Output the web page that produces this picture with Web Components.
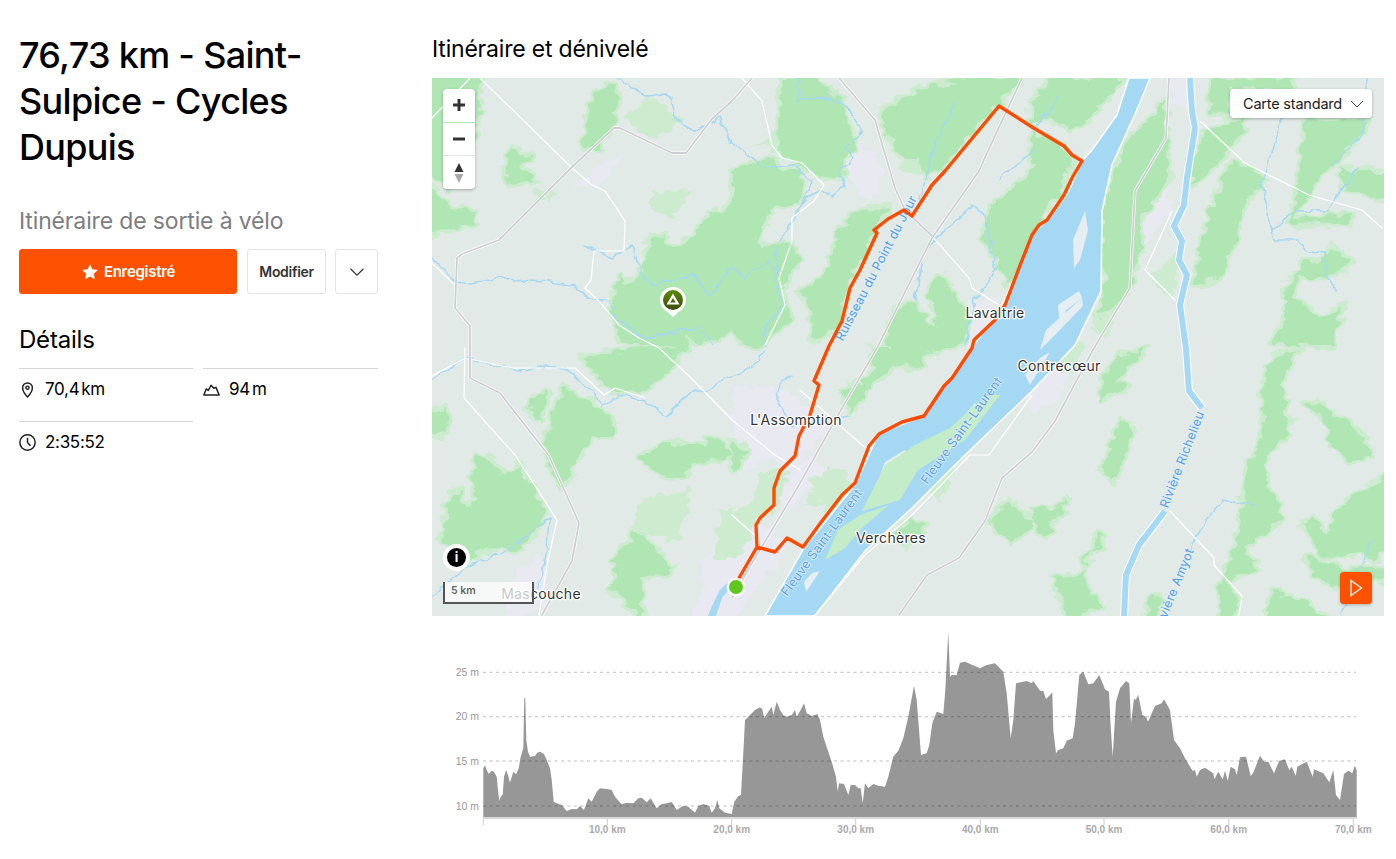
<!DOCTYPE html>
<html lang="fr">
<head>
<meta charset="utf-8">
<title>76,73 km - Saint-Sulpice - Cycles Dupuis</title>
<style>
  html, body { margin: 0; background: #fff; }
  body { font-family: Inter, "Liberation Sans", sans-serif; color: #000; overflow: hidden; }
</style>
</head>
<body>
<route-page>
  <route-summary slot="side" heading="76,73 km - Saint-Sulpice - Cycles Dupuis" kind="Itinéraire de sortie à vélo">
    <stat-item icon="pin">70,4<small>km</small></stat-item>
    <stat-item icon="hill">94<small>m</small></stat-item>
    <stat-item icon="clock">2:35:52</stat-item>
  </route-summary>
  <route-map></route-map>
  <elevation-chart></elevation-chart>
</route-page>

<script>
// Page Layout
class RoutePage extends HTMLElement {
  constructor() {
    super();
    this.attachShadow({ mode: 'open' });
    this.shadowRoot.innerHTML = `
      <style>
        :host { display: grid; grid-template-columns: 432px 952px; height: 859px; overflow: hidden; }
        h2 { font: 400 23px/28px Inter, sans-serif; letter-spacing: -0.2px; margin: 35px 0 15px; color: #000; }
      </style>
      <slot name="side"></slot>
      <main>
        <h2>Itinéraire et dénivelé</h2>
        <slot></slot>
      </main>
    `;
  }
}

const statIcons = {
  pin: `<path d="M8 15s-4.6-4.6-4.6-8.6a4.6 4.6 0 0 1 9.2 0C12.600 10.400 8 15 8 15z" fill="none" stroke="#222" stroke-width="1.400"/><circle cx="8" cy="6.300" r="1.500" fill="none" stroke="#222" stroke-width="1.300"/>`,
  hill: `<path d="M.8 13.200 3 7.500l2 1.300L7.600 4l2.600 2.800 2-.8 3 7.200z" fill="none" stroke="#222" stroke-width="1.400" stroke-linejoin="round"/>`,
  clock: `<circle cx="8" cy="8" r="7.200" fill="none" stroke="#222" stroke-width="1.400"/><path d="M8 3.500V8l2.800 3" fill="none" stroke="#222" stroke-width="1.400"/>`
};

// StatItem Component
class StatItem extends HTMLElement {
  constructor() {
    super();
    this.attachShadow({ mode: 'open' });
  }
  connectedCallback() {
    const icon = this.getAttribute('icon');
    this.shadowRoot.innerHTML = `
      <style>
        :host { display: flex; align-items: center; gap: 9px; height: 41px; box-sizing: border-box;
          border-top: 1px solid #d4d4d6; font: 400 17px/20px Inter, sans-serif; color: #000; letter-spacing: -0.3px; }
        svg { width: 17px; height: 17px; flex: none; }
        ::slotted(small) { font-size: 17px; margin-left: 2px; }
      </style>
      <svg viewBox="0 0 16 16">${statIcons[icon]}</svg>
      <span><slot></slot></span>
    `;
  }
}

// RouteSummary Component
class RouteSummary extends HTMLElement {
  constructor() {
    super();
    this.attachShadow({ mode: 'open' });
  }
  connectedCallback() {
    const heading = this.getAttribute('heading') || '';
    const kind = this.getAttribute('kind') || '';
    this.shadowRoot.innerHTML = `
      <style>
        :host { display: block; padding: 32px 0 0 19px; width: 359px; }
        h1 { font: 500 36px/46px Inter, sans-serif; letter-spacing: -0.7px; margin: 0; color: #000; width: 340px; }
        p { font: 400 23px/28px Inter, sans-serif; color: #7d7d82; letter-spacing: -0.15px; margin: 37px 0 14px; }
        .actions { display: flex; gap: 9px; height: 45px; }
        button { font: 600 14px/20px Inter, sans-serif; letter-spacing: -0.3px; border-radius: 3px; padding: 0; background: #fff;
          border: 1px solid #e4e4e6; color: #333; display: flex; align-items: center; justify-content: center; gap: 5px; }
        .save { width: 218px; background: #fc5200; border-color: #fc5200; color: #fff; margin-right: 1px; font-size: 15px; }
        .edit { width: 79px; }
        .more { width: 43px; }
        h3 { font: 400 24px/28px Inter, sans-serif; letter-spacing: -0.2px; margin: 32px 0 14px; color: #000; }
        .stats { display: grid; grid-template-columns: 174px 175px; column-gap: 10px; row-gap: 12px; }
      </style>
      <h1>${heading}</h1>
      <p>${kind}</p>
      <div class="actions">
        <button class="save">
          <svg width="18" height="18" viewBox="0 0 18 18"><path fill="#fff" d="M9 1.300l2.400 5 5.400.7-4 3.800 1 5.400L9 13.600l-4.800 2.600 1-5.400-4-3.800 5.400-.7z"/></svg>
          Enregistré
        </button>
        <button class="edit">Modifier</button>
        <button class="more" aria-label="Plus">
          <svg width="16" height="16" viewBox="0 0 16 16"><path d="M1.500 4.800 8 11.200l6.500-6.400" fill="none" stroke="#333" stroke-width="1.200"/></svg>
        </button>
      </div>
      <h3>Détails</h3>
      <div class="stats"><slot></slot></div>
    `;
  }
}

const pts = a => a.map(p => p.join(',')).join(' ');
const poly = (fill, list) => list.map(a => `<polygon fill="${fill}" points="${a}"/>`).join('');

// Forest patches, in page coordinates
const forests = [
  '612,301 619,278 626,284 632,281 642,275 645,255 652,235 660,240 665,238 672,250 682,244 695,235 702,222 715,211 722,214 732,201 732,170 750,164 770,160 785,170 800,170 806,185 800,200 784,206 770,210 762,232 760,250 775,243 790,240 800,260 782,288 790,320 772,336 760,350 745,345 732,330 715,340 700,345 685,335 690,350 660,345 640,345 620,340 610,310',
  '782,78 815,78 829,91 842,100 852,130 855,148 845,151 842,178 830,178 812,172 796,165 775,151 779,125 779,98',
  '809,308 799,291 815,282 829,268 836,240 845,225 852,214 869,211 889,208 875,228 868,240 865,258 852,272 849,285 843,305 839,325 825,335 812,341',
  '882,111 900,100 919,88 940,84 965,78 1022,78 999,103 982,122 965,141 942,168 925,178 919,158 902,158 885,135',
  '927,295 939,275 948,282 952,291 965,311 968,330 962,345 945,348 932,345 938,320',
  '892,311 915,305 932,325 945,348 905,352 885,345',
  '992,205 1010,190 1025,178 1032,168 1042,170 1032,235 1019,268 1009,285 998,262 982,238',
  '1052,78 1122,78 1114,92 1102,105 1085,122 1072,130 1050,118 1032,125 1032,100',
  '1032,131 1065,148 1072,165 1059,195 1039,221 1032,235',
  '1132,135 1150,118 1165,101 1167,138 1169,178 1149,208 1139,218 1142,245 1132,271 1132,288 1115,305 1099,318 1104,288 1102,211 1115,165',
  '1232,161 1250,170 1265,178 1245,205 1238,228 1232,248 1219,278 1195,285 1202,235 1222,178',
  '1205,131 1225,124 1245,118 1239,138 1215,165 1195,185 1190,165',
  '1209,78 1292,78 1292,88 1232,90 1228,118 1210,112',
  '1305,118 1365,121 1362,135 1332,165 1315,180 1309,195 1292,218 1352,215 1352,222 1299,225 1290,220 1296,195 1300,160',
  '1339,171 1390,171 1390,201 1345,190',
  '1329,248 1352,261 1342,270 1322,278 1299,278 1292,295 1319,318 1342,305 1332,345 1272,345 1285,320 1285,290 1300,265 1322,262',
  '1272,358 1299,348 1282,381 1289,435 1265,455 1265,480 1282,518 1245,548 1258,570 1225,581 1239,601 1232,622 1220,622 1220,585 1235,545 1249,465 1255,455 1265,421 1262,385',
  '1305,401 1325,408 1345,420 1362,435 1372,455 1352,461 1332,448 1325,425',
  '1339,508 1390,471 1390,545 1375,561 1359,551 1340,556 1322,555 1302,525 1312,515 1325,535',
  '1305,555 1345,570 1390,568 1390,580 1332,585 1315,575',
  '1272,591 1300,600 1332,622 1265,622',
  '1122,421 1134,428 1128,445 1118,470 1112,481 1102,470 1110,445',
  '1032,508 1042,505 1052,512 1069,498 1055,520 1045,538 1032,525',
  '1099,531 1104,548 1082,555 1085,578 1102,608 1065,620 1055,578 1079,575 1090,555',
  '1115,358 1149,348 1135,358 1115,381 1128,386 1102,401 1100,388',
  '1152,595 1162,601 1155,622 1144,622',
  '989,518 1009,501 1032,525 1012,541 995,530',
  '839,391 872,375 872,348 932,348 919,368 895,365 865,391 852,412',
  '732,441 749,451 732,475',
  '472,478 477,455 492,461 502,475 519,465 530,485 545,508 539,528 515,551 490,548 465,561 442,541 449,495 460,491 465,508 475,500',
  '544,445 562,388 580,395 595,405 615,421 612,438 592,438 575,465 562,488 552,470',
  '530,398 548,391 545,411 539,421 528,411',
  '582,358 639,348 682,348 672,368 645,391 615,391 599,378',
  '639,458 662,445 692,445 719,438 732,455 692,465 678,478 662,476',
  '615,561 632,535 645,535 672,571 642,578 642,622 612,590',
  '512,148 532,158 520,165 538,180 509,185 505,168',
  '582,148 592,98 609,81 619,98 612,128 598,148',
  '426,181 452,208 479,213 472,225 426,235',
  '426,72 482,72 480,100 476,140 450,188 426,170',
  '426,415 445,410 448,425 438,438 426,430',
  '910,520 925,528 905,545 892,535'
];
const lightForests = [
  '825,468 849,485 825,500 805,505',
  '625,118 649,95 685,121 652,140',
  '652,192 690,190 672,220 648,210',
  '532,191 559,191 548,205',
  '755,145 800,120 790,150',
  '760,470 790,470 775,510 750,520',
  '810,480 842,468 858,500 825,512',
  '1090,320 1130,285 1104,340',
  '920,480 960,460 940,500',
  '720,510 760,505 740,560 715,560',
  '905,140 930,128 925,180 900,168',
  '1150,275 1180,250 1172,300',
  '1040,360 1085,340 1075,375',
  '1260,380 1300,420 1280,440',
  '640,500 690,490 680,540 630,530'
];
const urban = [
  '732,385 790,392 830,430 790,470 770,455 745,470 732,455',
  '700,560 760,520 790,545 755,590 732,622 690,622 705,585',
  '770,490 810,455 825,470 790,510',
  '960,305 1000,298 1005,330 975,350 950,345',
  '1040,350 1075,345 1060,400 1035,410 1015,385',
  '1075,160 1092,150 1075,190',
  '610,160 622,155 605,180 592,188 575,185',
  '1090,95 1108,78 1125,78 1105,105',
  '1170,78 1195,78 1190,110 1172,100',
  '1160,160 1172,210 1150,240 1140,250',
  '825,158 860,140 885,170 872,200',
  '935,120 955,110 970,135 950,150',
  '1100,380 1130,348 1095,408',
  '520,570 545,555 548,605 510,622 505,590'
];
const islands = [
  '1085,211 1088,230 1080,260 1074,268 1073,240',
  '1079,291 1082,298 1066,310 1060,328 1058,305',
  '1082,298 1083,306 1050,340 1040,350 1046,330',
  '905,450 906,456 890,472 880,475 885,462',
  '820,571 806,592 804,582 812,573',
  '975,403 982,408 960,430 950,432',
  '1025,375 1040,358 1050,352 1030,385'
];
const marshes = [
  '950,428 975,405 990,395 1000,395 965,440 918,470 900,500 862,511 885,465 915,445',
  '889,505 862,528 845,548 825,560 838,530 860,515'
];

const grayRoads = [
  [[752,78],[732,101],[712,119],[686,153],[672,153],[620,128],[614,128],[572,167],[499,240],[462,254],[457,258],[455,308],[470,326],[470,378],[500,393],[549,456],[579,523],[572,561],[542,615]],
  [[839,78],[875,120],[895,188],[905,210],[932,236]],
  [[1022,78],[987,153],[979,171],[932,238],[877,348],[842,408],[799,485],[749,568],[732,598]],
  [[1169,78],[1166,138],[1135,191],[1130,288],[1094,348],[1055,421],[1032,452],[1002,478],[985,521],[959,558],[927,575],[899,615]]
];
const whiteRoads = [
  [[480,78],[572,168],[592,185],[605,191],[625,221],[624,251],[594,251],[591,280],[585,288],[599,301],[619,325],[639,338],[659,348],[689,376],[732,420],[775,455],[800,470]],
  [[465,348],[464,398],[515,455],[532,481],[557,520],[547,565],[539,615]],
  [[432,376],[465,358],[512,368],[575,368],[604,395],[615,388],[645,398]],
  [[742,78],[762,101],[772,145],[782,158],[802,163],[824,185],[814,201],[792,218],[792,241],[779,278],[785,305],[765,345]],
  [[932,236],[969,278],[972,288],[999,305]],
  [[1200,121],[1245,163],[1309,195],[1362,210],[1382,228]],
  [[1145,270],[1175,300]],
  [[1172,211],[1145,270]],
  [[1170,511],[1214,558],[1214,565],[1242,596],[1239,615]],
  [[1032,395],[989,455],[970,455],[912,515],[865,555],[815,615]],
  [[732,515],[760,540]],
  [[800,390],[845,430],[870,452]],
  [[432,263],[455,285]],
  [[432,118],[470,78]]
];
const streams = [
  [[617,78],[632,88],[645,96],[669,95],[675,118],[695,130],[719,118],[732,143],[765,168],[795,165],[812,181],[804,201],[792,221],[775,251],[779,268],[772,278],[785,305],[765,325],[765,345]],
  [[799,78],[797,101],[815,98],[842,101],[862,130],[845,148],[853,158],[840,170],[845,185],[832,198],[822,191],[804,201]],
  [[432,258],[455,281],[472,283],[490,280],[500,276],[515,282],[532,280],[550,282],[572,285],[589,298],[609,301],[619,321],[645,338],[679,331],[699,328],[715,345]],
  [[585,246],[612,258],[632,245],[642,275],[652,285],[695,275],[709,295],[732,268],[745,278],[769,261],[775,270]],
  [[432,381],[465,358],[519,371],[545,366],[565,368],[592,391],[602,408],[619,395],[645,401],[667,416],[692,391],[709,391],[725,378],[750,370],[765,350]],
  [[432,595],[465,568],[512,548],[549,518],[547,550],[539,588]],
  [[1282,118],[1262,185],[1272,231],[1275,241],[1299,241],[1305,250],[1325,253],[1327,275],[1337,293]],
  [[1272,230],[1292,211],[1327,211],[1357,168]],
  [[1332,165],[1362,135],[1367,78]],
  [[1190,550],[1205,521],[1222,501],[1254,506]],
  [[1036,125],[1052,108],[1058,95]],
  [[920,200],[935,145],[955,102]],
  [[915,300],[925,250],[972,205],[984,215],[996,270],[975,300],[965,345]],
  [[850,415],[790,425],[775,395],[790,375]],
  [[1032,150],[1000,180]],
  [[1372,540],[1340,615]]
];
const route = [[757,547],[775,552],[787,538],[803,547],[819,525],[842,495],[855,483],[869,446],[879,434],[902,422],[924,416],[944,386],[952,378],[972,348],[974,340],[995,320],[1005,305],[1019,268],[1032,235],[1039,225],[1047,220],[1064,195],[1072,178],[1082,161],[1072,155],[1064,146],[1032,127],[999,106],[945,171],[932,185],[912,216],[904,210],[888,219],[874,230],[877,233],[860,270],[850,288],[842,321],[829,346],[814,381],[819,385],[810,415],[799,436],[795,456],[780,471],[774,488],[774,505],[760,518],[756,525],[757,547],[739,578],[736,586]];

// RouteMap Component
class RouteMap extends HTMLElement {
  constructor() {
    super();
    this.attachShadow({ mode: 'open' });
  }
  connectedCallback() {
    const lines = (list, stroke, w) => list.map(l => `<polyline points="${pts(l)}" fill="none" stroke="${stroke}" stroke-width="${w}" stroke-linejoin="round" stroke-linecap="round"/>`).join('');
    const place = (x, y, t) => `<text class="place" x="${x}" y="${y}" text-anchor="middle">${t}</text>`;
    const water = (x, y, deg, t) => `<text class="water" transform="translate(${x} ${y}) rotate(${deg})" text-anchor="middle">${t}</text>`;
    this.shadowRoot.innerHTML = `
      <style>
        :host { display: block; position: relative; width: 952px; height: 538px; overflow: hidden; background: #e2eae8; font-family: Inter, sans-serif; }
        svg.map { display: block; }
        .place { font: 400 14px Inter, sans-serif; fill: #333; paint-order: stroke; stroke: #fff; stroke-width: 2.500px; stroke-linejoin: round; letter-spacing: .3px; }
        .water { font: 400 12.500px Inter, sans-serif; fill: #5b9fe0; paint-order: stroke; stroke: #dfeef2; stroke-width: 1.500px; letter-spacing: .3px; }
        .zoom { position: absolute; left: 11px; top: 11px; width: 32px; height: 100px; background: #fff; border-radius: 4px;
          box-shadow: 0 1px 3px rgba(0,0,0,.3); display: flex; flex-direction: column; }
        .zoom div { height: 33px; display: flex; align-items: center; justify-content: center; border-top: 1px solid #e6e6e6; }
        .zoom div:first-child { border-top: 0; border-bottom: 1px solid #b6e6b8; }
        .zoom div:nth-child(2) { border-top: 0; }
        .style-pick { position: absolute; right: 12px; top: 11px; width: 142px; height: 29px; box-sizing: border-box; background: #fff; border-radius: 4px;
          box-shadow: 0 1px 3px rgba(0,0,0,.3); display: flex; align-items: center; justify-content: space-between; padding: 0 8px 0 13px;
          font: 400 14.500px Inter, sans-serif; color: #222; letter-spacing: -0.2px; }
        .info { position: absolute; left: 11px; top: 466px; width: 27px; height: 27px; border-radius: 50%; background: #fff; display: flex; align-items: center; justify-content: center; }
        .info span { width: 19px; height: 19px; border-radius: 50%; background: #000; color: #fff; font: 700 13px/19px Inter, sans-serif; text-align: center; }
        .scale { position: absolute; left: 11px; top: 504px; width: 91px; height: 22px; box-sizing: border-box; border: 2px solid #555; border-top: 0;
          background: rgba(255,255,255,.72); font: 600 10.500px/18px Inter, sans-serif; color: #666; padding-left: 6px; }
        .play { position: absolute; right: 12px; top: 494px; width: 32px; height: 32px; border-radius: 4px; background: #fc5200; box-shadow: 0 1px 3px rgba(0,0,0,.25);
          display: flex; align-items: center; justify-content: center; }
      </style>
      <svg class="map" width="952" height="538" viewBox="432 78 952 538">
        <defs>
          <linearGradient id="poi" x1="0" y1="0" x2="0" y2="1">
            <stop offset="0" stop-color="#5c8a00"/><stop offset="1" stop-color="#3d4a10"/>
          </linearGradient>
          <filter id="rough" filterUnits="userSpaceOnUse" x="412" y="58" width="992" height="578">
            <feTurbulence type="fractalNoise" baseFrequency="0.07 0.11" numOctaves="2" seed="4"/>
            <feDisplacementMap in="SourceGraphic" scale="14" xChannelSelector="R" yChannelSelector="G"/>
            <feGaussianBlur stdDeviation="0.5"/>
          </filter>
          <filter id="wiggle" filterUnits="userSpaceOnUse" x="412" y="58" width="992" height="578">
            <feTurbulence type="fractalNoise" baseFrequency="0.09" numOctaves="2" seed="9"/>
            <feDisplacementMap in="SourceGraphic" scale="8" xChannelSelector="R" yChannelSelector="G"/>
            <feGaussianBlur stdDeviation="0.25"/>
          </filter>
          <filter id="soft"><feGaussianBlur stdDeviation="0.35"/></filter>
        </defs>
        <rect x="432" y="78" width="952" height="538" fill="#e2eae8"/>
        <g filter="url(#rough)">
          ${poly('#e9e9f2', urban)}
          ${poly('#cdeccf', lightForests)}
          <g stroke="#cdeccf" stroke-width="7" stroke-linejoin="round">${poly('#cdeccf', forests)}</g>
          ${poly('#b0e6b4', forests)}
        </g>
        <polygon fill="#a5d9f3" stroke="#fff" stroke-width="1.500" filter="url(#soft)" points="1129,78 1117,115 1092,150 1082,161 1069,191 1052,215 1032,235 1020,265 1000,310 985,330 972,348 944,386 925,416 879,433 855,485 804,548 765,616 815,616 865,551 912,508 965,455 1032,391 1075,345 1101,291 1102,211 1112,165 1139,105 1150,78"/>
        <g filter="url(#soft)">
          ${poly('#e6edf3', islands)}
          ${poly('#c4ecc8', marshes)}
          <polygon fill="#a5d9f3" points="712,606 720,590 728,582 733,585 722,598 716,616 708,616"/>
          <polyline fill="none" stroke="#fff" stroke-width="8" points="1190,78 1192,111 1195,128 1187,178 1184,205 1174,226 1182,241 1179,260 1187,275 1180,305 1186,348 1189,391 1202,408"/>
          <polyline fill="none" stroke="#a5d9f3" stroke-width="6" points="1190,78 1192,111 1195,128 1187,178 1184,205 1174,226 1182,241 1179,260 1187,275 1180,305 1186,348 1189,391 1202,408"/>
          <polyline fill="none" stroke="#fff" stroke-width="8" points="1165,511 1139,545 1126,575 1124,616"/>
          <polyline fill="none" stroke="#a5d9f3" stroke-width="6" points="1165,511 1139,545 1126,575 1124,616"/>
        </g>
        <g filter="url(#wiggle)">${lines(streams, '#a5d9f3', 1.5)}</g>
        <g filter="url(#soft)">
          ${lines(whiteRoads, '#fff', 1.2)}
          ${lines(grayRoads, '#fff', 3)}
          ${lines(grayRoads, '#cfcfd3', 1.8)}
        </g>
        ${water(880, 270, -62.5, 'Ruisseau du Point du Jour')}
        ${water(825, 545, -54, 'Fleuve Saint-Laurent')}
        ${water(965, 433, -54, 'Fleuve Saint-Laurent')}
        ${water(1186, 461, -69, 'Rivière Richelieu')}
        ${water(1178, 590, -68, 'Rivière Amyot')}
        <polyline points="${pts(route)}" fill="none" stroke="#fc4c02" stroke-width="3.400" stroke-linejoin="round"/>
        <circle cx="736" cy="587" r="9.500" fill="#fff" fill-opacity=".85"/>
        <circle cx="736" cy="587" r="7" fill="#5fc71e"/>
        ${place(995, 318, 'Lavaltrie')}
        ${place(1059, 371, 'Contrecœur')}
        ${place(796, 425, 'L\'Assomption')}
        ${place(891, 543, 'Verchères')}
        ${place(541, 599, 'Mascouche')}
        <path d="M673 317l-6-5.500a13 13 0 1 1 12 0z" fill="#fff"/>
        <circle cx="673" cy="300" r="10" fill="url(#poi)"/>
        <path d="M673 293.500l6.500 11h-13zm0 4.500l-2.800 4.500h5.600z" fill="#fff" fill-rule="evenodd"/>
      </svg>
      <div class="zoom">
        <div><svg width="14" height="14" viewBox="0 0 14 14"><path d="M7 1v12M1 7h12" stroke="#333" stroke-width="3"/></svg></div>
        <div><svg width="14" height="14" viewBox="0 0 14 14"><path d="M1 7h12" stroke="#333" stroke-width="3"/></svg></div>
        <div><svg width="14" height="22" viewBox="0 0 14 22"><path d="M7 1l4.500 9h-9z" fill="#333"/><path d="M7 21l-4.500-9h9z" fill="#aaa"/></svg></div>
      </div>
      <div class="style-pick">Carte standard
        <svg width="14" height="14" viewBox="0 0 14 14"><path d="M1 4 7 10l6-6" fill="none" stroke="#444" stroke-width="1"/></svg>
      </div>
      <div class="info"><span>i</span></div>
      <div class="scale">5 km</div>
      <div class="play"><svg width="14" height="18" viewBox="0 0 14 18"><path d="M2 1.500 12.500 9 2 16.500z" fill="none" stroke="#fff" stroke-width="1.300"/></svg></div>
    `;
  }
}

// Elevation profile, traced at 3x: [left offset, points]
const profile = [
  [440, [[130,445],[135,436],[140,450],[146,462],[155,452],[162,455],[170,470],[174,510],[178,542],[183,528],[188,525],[192,470],[198,450],[204,465],[210,488],[220,455],[228,463],[236,445],[242,410],[250,385],[253,235],[256,235],[259,360],[264,395],[270,410],[285,408],[292,398],[300,395],[312,402],[320,420],[330,445],[335,480],[341,545],[350,550],[365,555],[380,573],[395,567],[410,568],[420,558],[432,570],[445,535],[455,545],[470,515],[480,505],[500,507],[515,510],[525,530],[545,553],[560,548],[580,550],[595,535],[605,533],[620,547],[632,535],[650,565],[665,552],[680,550],[695,546],[710,570],[730,557],[745,560],[765,578],[775,558],[790,552],[808,558],[815,578],[825,565],[832,540],[838,565],[855,578],[875,582],[883,545],[895,528],[903,525],[910,400],[915,300]]],
  [730, [[60,285],[75,270],[90,262],[97,268],[103,295],[115,275],[125,260],[130,285],[140,245],[150,270],[160,285],[170,290],[185,285],[195,270],[200,290],[212,270],[222,250],[230,280],[245,288],[262,282],[270,300],[280,350],[295,395],[305,425],[318,470],[323,515],[327,490],[342,492],[355,525],[362,495],[375,495],[385,505],[392,505],[398,550],[405,490],[415,505],[430,492],[445,497],[465,500],[475,470],[490,410],[505,392],[520,355],[535,290],[552,197],[560,240],[573,405],[590,400],[598,375],[607,310],[620,275],[640,282],[646,210],[655,35],[660,170],[665,165],[680,165],[690,128],[705,125],[750,145],[770,135],[795,130],[820,155],[830,220],[842,355],[850,300],[858,190],[880,185],[890,183],[905,190],[910,183],[930,212],[940,213],[948,237]]],
  [1040, [[30,225],[37,217],[40,330],[48,400],[55,390],[70,385],[80,362],[98,355],[105,310],[118,165],[130,155],[145,193],[160,190],[178,165],[195,208],[207,215],[212,320],[218,410],[228,245],[240,205],[258,183],[268,190],[273,310],[282,235],[287,240],[295,225],[307,285],[318,290],[324,305],[345,258],[365,250],[372,238],[390,270],[402,360],[420,385],[435,415],[458,453],[465,450],[470,470],[480,450],[495,443],[520,460],[523,478],[535,455],[548,478],[555,452],[563,482],[572,440],[585,448],[590,465],[600,412],[618,410],[632,468],[640,458],[660,407],[672,425],[685,425],[702,460],[718,422],[735,418],[748,450],[755,440],[767,468],[772,440],[800,425],[818,470],[822,448],[850,460],[868,487],[880,450],[888,525],[900,540],[912,462],[925,452],[937,460],[944,437],[950,450]]]
];

// ElevationChart Component
class ElevationChart extends HTMLElement {
  constructor() {
    super();
    this.attachShadow({ mode: 'open' });
  }
  connectedCallback() {
    const area = profile.flatMap(([x0, list]) => list.map(([x, y]) => [(x0 + x / 3 - 432).toFixed(1), (620 + y / 3 - 616).toFixed(1)]));
    const outline = `51.300,201 ${pts(area)} 924.700,201`;
    const grid = [[25, 56.3], [20, 100.7], [15, 145], [10, 190]];
    const ticks = [51.3, 175.3, 299.7, 423.7, 548.3, 672, 796.7, 921.3];
    this.shadowRoot.innerHTML = `
      <style>
        :host { display: block; width: 952px; height: 243px; }
        svg { display: block; }
        .y { font: 400 10.500px "Liberation Sans", sans-serif; fill: #999; }
        .x { font: 700 10px "Liberation Sans", sans-serif; fill: #aaa; }
      </style>
      <svg width="952" height="243" viewBox="0 0 952 243">
        <polygon points="${outline}" fill="#979797"/>
        ${grid.map(([m, y]) => `
          <line x1="51" x2="924" y1="${y}" y2="${y}" stroke="#000" stroke-opacity=".25" stroke-width="1" stroke-dasharray="3 3.500"/>
          <text class="y" x="47" y="${y + 3.5}" text-anchor="end">${m} m</text>`).join('')}
        <rect x="51" y="201" width="874" height="2" fill="#d9d9d9"/>
        ${ticks.map((x, i) => `
          <line x1="${x}" x2="${x}" y1="203" y2="209" stroke="#ccc"/>
          ${i ? `<text class="x" x="${x}" y="217" text-anchor="middle">${i}0,0 km</text>` : ''}`).join('')}
      </svg>
    `;
  }
}

// Register Components
customElements.define('route-page', RoutePage);
customElements.define('stat-item', StatItem);
customElements.define('route-summary', RouteSummary);
customElements.define('route-map', RouteMap);
customElements.define('elevation-chart', ElevationChart);
</script>
</body>
</html>
